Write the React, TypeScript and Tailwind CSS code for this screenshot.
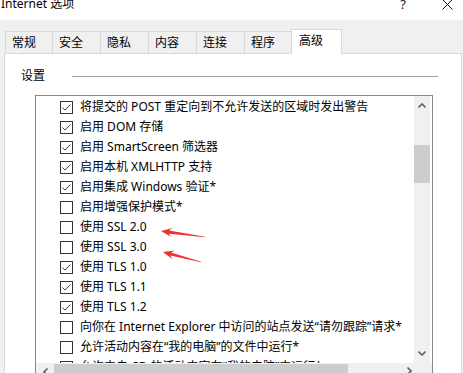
import React from "react";

const rows: [boolean, string][] = [
  [true, "将提交的 POST 重定向到不允许发送的区域时发出警告"],
  [true, "启用 DOM 存储"],
  [true, "启用 SmartScreen 筛选器"],
  [true, "启用本机 XMLHTTP 支持"],
  [true, "启用集成 Windows 验证*"],
  [false, "启用增强保护模式*"],
  [false, "使用 SSL 2.0"],
  [false, "使用 SSL 3.0"],
  [true, "使用 TLS 1.0"],
  [true, "使用 TLS 1.1"],
  [true, "使用 TLS 1.2"],
  [false, "向你在 Internet Explorer 中访问的站点发送“请勿跟踪”请求*"],
  [false, "允许活动内容在“我的电脑”的文件中运行*"],
  [false, "允许来自 CD 的活动内容在“我的电脑”中运行*"],
];

const tabs = [
  { label: "常规", w: "w-[47px]" },
  { label: "安全", w: "w-[48px]" },
  { label: "隐私", w: "w-[48px]" },
  { label: "内容", w: "w-[48px]" },
  { label: "连接", w: "w-[48px]" },
  { label: "程序", w: "w-[47px]" },
];

// tapered red annotation arrow, tip -> tail
const arrowPoints = (tx: number, ty: number, ex: number, ey: number) => {
  const dx = ex - tx;
  const dy = ey - ty;
  const len = Math.hypot(dx, dy);
  const ux = dx / len;
  const uy = dy / len;
  const nx = -uy;
  const ny = ux;
  const head = 11;
  const hw = 4.5;
  const sw = 1.6;
  const bx = tx + ux * head;
  const by = ty + uy * head;
  const bx2 = tx + ux * (head - 3);
  const by2 = ty + uy * (head - 3);
  const p = [
    [tx, ty],
    [bx + nx * hw, by + ny * hw],
    [bx2 + nx * sw, by2 + ny * sw],
    [ex + nx * 0.3, ey + ny * 0.3],
    [ex - nx * 0.3, ey - ny * 0.3],
    [bx2 - nx * sw, by2 - ny * sw],
    [bx - nx * hw, by - ny * hw],
  ];
  return p.map((q) => q.map((v) => v.toFixed(1)).join(",")).join(" ");
};

const CheckBox = ({ checked }: { checked: boolean }) => (
  <div className="w-[13px] h-[13px] border border-[#333333] bg-white shrink-0 flex items-center justify-center">
    {checked && (
      <svg width="11" height="11" viewBox="0 0 11 11">
        <polyline
          points="1.5,5.5 4,8 9.5,2.5"
          fill="none"
          stroke="#444"
          strokeWidth="1"
        />
      </svg>
    )}
  </div>
);

const Chevron = ({ dir }: { dir: "up" | "down" | "left" | "right" }) => {
  const pts = {
    up: "0.5,4.5 4,1 7.5,4.5",
    down: "0.5,1.5 4,5 7.5,1.5",
    left: "4.5,0.5 1,4 4.5,7.5",
    right: "1.5,0.5 5,4 1.5,7.5",
  }[dir];
  const vertical = dir === "up" || dir === "down";
  return (
    <svg
      width={vertical ? 8 : 6}
      height={vertical ? 6 : 8}
      viewBox={vertical ? "0 0 8 6" : "0 0 6 8"}
    >
      <polyline points={pts} fill="none" stroke="#606060" strokeWidth="1.6" />
    </svg>
  );
};

export default function App() {
  return (
    <div className="relative w-[463px] h-[373px] overflow-hidden bg-[#f0f0f0] text-[12px] text-black font-['Noto_Sans','Noto_Sans_CJK_SC',sans-serif]">
      {/* title bar */}
      <div className="h-[20px] bg-white flex items-start">
        <span className="pl-[1px] mt-[-2px] leading-[12px]">Internet 选项</span>
        <span className="ml-auto mt-[-2px] leading-[12px] text-[13px] text-[#222]">?</span>
        <svg className="ml-[36px] mr-[10px]" width="11" height="10" viewBox="0 0 11 10">
          <path d="M0.5,-0.5 L10.5,9.5 M10.5,-0.5 L0.5,9.5" stroke="#111" strokeWidth="1" />
        </svg>
      </div>

      <div className="pl-[4px] pr-[1px]">
        {/* tabs */}
        <div className="h-[33px] flex items-end pl-[1px]">
          {tabs.map((t) => (
            <div
              key={t.label}
              className={`${t.w} h-[22px] border-l border-t border-[#d9d9d9] bg-[#f0f0f0] pl-[6px] leading-[21px]`}
            >
              {t.label}
            </div>
          ))}
          <div className="relative z-10 w-[51px] h-[25px] mb-[-1px] border border-b-0 border-[#d9d9d9] bg-white pl-[7px] leading-[22px]">
            高级
          </div>
        </div>

        {/* panel */}
        <div className="h-[330px] bg-white border border-[#d9d9d9]">
          <div className="flex items-center pt-[14px] pl-[16px] pr-[23px]">
            <span className="leading-[16px]">设置</span>
            <div className="flex-1 h-px bg-[#a0a0a0] ml-[27px]" />
          </div>

          <div className="mt-[11px] ml-[30px] w-[398px] h-[300px] border border-[#828790] flex flex-col">
            <div className="h-[267px] flex">
              <div className="flex-1 overflow-hidden pt-[1px]">
                {rows.map(([checked, label], i) => (
                  <div key={i} className="h-[20px] flex items-center pl-[24px] gap-[7px] whitespace-nowrap">
                    <CheckBox checked={checked} />
                    <span className="leading-[20px] mt-[-1px]">{label}</span>
                  </div>
                ))}
              </div>
              <div className="w-[16px] mr-[2px] bg-[#f0f0f0] flex flex-col items-center">
                <div className="h-[19px] flex items-center justify-center pt-[1px]">
                  <Chevron dir="up" />
                </div>
                <div className="h-[30px]" />
                <div className="w-full h-[38px] bg-[#cdcdcd]" />
                <div className="flex-1" />
                <div className="h-[18px] flex items-center justify-center pb-[2px]">
                  <Chevron dir="down" />
                </div>
              </div>
            </div>
            <div className="h-[17px] bg-[#f0f0f0] flex items-start">
              <div className="w-[18px] h-[17px] flex items-center justify-center pl-[2px] pt-[1px]">
                <Chevron dir="left" />
              </div>
              <div className="w-[294px] h-[15px] mt-[1px] bg-[#cdcdcd]" />
              <div className="w-[57px]" />
              <div className="w-[8px] h-[15px] flex items-center justify-center pt-[1px]">
                <Chevron dir="right" />
              </div>
            </div>
          </div>
        </div>
      </div>

      {/* red annotation arrows */}
      <svg className="absolute inset-0 pointer-events-none" width="463" height="373">
        <polygon points={arrowPoints(161, 231, 205, 237)} fill="#e8362c" />
        <polygon points={arrowPoints(163, 252, 201, 262)} fill="#e8362c" />
      </svg>
    </div>
  );
}
